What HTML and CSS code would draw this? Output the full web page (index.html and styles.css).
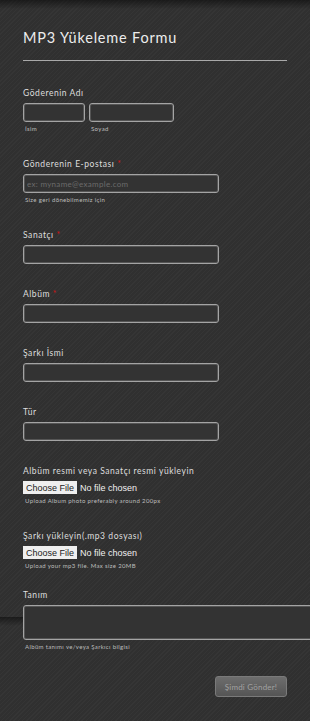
FILE: index.html
```html
<!DOCTYPE html>
<html lang="tr">
<head>
  <meta charset="UTF-8">
  <meta name="viewport" content="width=device-width, initial-scale=1.0">
  <title>MP3 Yükeleme Formu</title>
  <link rel="stylesheet" href="styles.css">
</head>
<body>
  <form class="formAll">
    <div class="formHeader">
      <h2 class="formTitle">MP3 Yükeleme Formu</h2>
    </div>

    <div class="campo">
      <label class="rotulo">Göderenin Adı</label>
      <div class="nomeLinha">
        <div>
          <input type="text" class="caixa caixaNome">
          <span class="subRotulo">İsim</span>
        </div>
        <div>
          <input type="text" class="caixa caixaSobrenome">
          <span class="subRotulo">Soyad</span>
        </div>
      </div>
    </div>

    <div class="campo">
      <label class="rotulo">Gönderenin E-postası <span class="obrigatorio">*</span></label>
      <input type="email" class="caixa" placeholder="ex: myname@example.com">
      <span class="subRotulo">Size geri dönebilmemiz için</span>
    </div>

    <div class="campo">
      <label class="rotulo">Sanatçı <span class="obrigatorio">*</span></label>
      <input type="text" class="caixa">
    </div>

    <div class="campo">
      <label class="rotulo">Albüm <span class="obrigatorio">*</span></label>
      <input type="text" class="caixa">
    </div>

    <div class="campo">
      <label class="rotulo">Şarkı İsmi</label>
      <input type="text" class="caixa">
    </div>

    <div class="campo">
      <label class="rotulo">Tür</label>
      <input type="text" class="caixa">
    </div>

    <div class="campo">
      <label class="rotulo">Albüm resmi veya Sanatçı resmi yükleyin</label>
      <div class="arquivoLinha">
        <input type="file" class="arquivo">
      </div>
      <span class="subRotulo">Upload Album photo preferably around 200px</span>
    </div>

    <div class="campo campoCurto">
      <label class="rotulo">Şarkı yükleyin(.mp3 dosyası)</label>
      <div class="arquivoLinha">
        <input type="file" class="arquivo">
      </div>
      <span class="subRotulo">Upload your mp3 file. Max size 20MB</span>
    </div>

    <div class="campo">
      <label class="rotulo">Tanım</label>
      <div class="recorteTexto">
        <textarea class="caixa caixaTexto"></textarea>
      </div>
      <span class="subRotulo">Albüm tanımı ve/veya Şarkıcı bilgisi</span>
    </div>

    <div class="rodape">
      <button type="button" class="botaoEnviar">Şimdi Gönder!</button>
    </div>
  </form>
</body>
</html>
```

FILE: styles.css
```css
body {
  margin: 0;
  padding: 0;
  overflow-x: hidden;
  color: #e2e2e2;
  font-family: Lato, "DejaVu Sans", sans-serif;
  background-color: #313131;
  background-image:
    linear-gradient(to bottom, rgba(0,0,0,0.45), rgba(0,0,0,0) 9px),
    repeating-linear-gradient(135deg, rgba(255,255,255,0.018) 0px, rgba(255,255,255,0.018) 1px, rgba(0,0,0,0.025) 1px, rgba(0,0,0,0.025) 3px);
  background-size: 100% 617px, auto;
  background-repeat: repeat-y, repeat;
  min-height: 721px;
}

.formAll {
  width: 264px;
  padding: 28px 0 22px 23px;
}

.formHeader {
  border-bottom: 1px solid #a9a9a9;
  padding-bottom: 12px;
  margin-bottom: 26px;
}

.formTitle {
  margin: 0;
  font-size: 14.5px;
  line-height: 20px;
  font-weight: normal;
  letter-spacing: 0.8px;
  color: #ececec;
}

.campo {
  margin-bottom: 24px;
}

.campoCurto {
  margin-bottom: 18px;
}

.rotulo {
  display: block;
  font-size: 8.5px;
  line-height: 12px;
  letter-spacing: 0.55px;
  margin-bottom: 4px;
  color: #dedede;
}

.obrigatorio {
  color: #d01515;
}

.caixa {
  display: block;
  box-sizing: border-box;
  width: 196px;
  height: 19px;
  margin: 0;
  padding: 0 3px;
  border: 1px solid #a4a4a4;
  border-radius: 3px;
  background-color: #333333;
  box-shadow: inset 0 0 0 1px #555555;
  color: #eeeeee;
  font-family: Lato, "DejaVu Sans", sans-serif;
  font-size: 8px;
  letter-spacing: 0.3px;
}

.caixa::placeholder {
  color: #6b6b6b;
}

.nomeLinha {
  display: flex;
  gap: 4px;
}

.caixaNome {
  width: 62px;
}

.caixaSobrenome {
  width: 85px;
}

.recorteTexto {
  width: 287px;
  height: 35px;
  overflow: hidden;
}

.caixaTexto {
  width: 300px;
  height: 35px;
  resize: none;
}

.subRotulo {
  display: block;
  font-size: 6px;
  line-height: 10px;
  letter-spacing: 0.35px;
  margin-top: 2px;
  padding-left: 2px;
  color: #bdbdbd;
}

.arquivoLinha {
  height: 13px;
  overflow: hidden;
}

.arquivo {
  display: block;
  height: 13px;
  margin: 0;
  font-family: "Liberation Sans", Arial, sans-serif;
  font-size: 9px;
  color: #f0f0f0;
}

.arquivo::file-selector-button {
  height: 13px;
  padding: 0 3px;
  margin-right: 3px;
  border: none;
  background-color: #efefef;
  color: #222222;
  font-family: "Liberation Sans", Arial, sans-serif;
  font-size: 9px;
}

.rodape {
  display: flex;
  justify-content: flex-end;
  margin-top: 4px;
}

.botaoEnviar {
  width: 72px;
  height: 21px;
  padding: 0;
  border: 1px solid #7a7a7a;
  border-radius: 3px;
  background: linear-gradient(to bottom, #6d6d6d, #555555);
  color: #a2a2a2;
  font-family: Lato, "DejaVu Sans", sans-serif;
  font-size: 8px;
  letter-spacing: 0.2px;
}
```
